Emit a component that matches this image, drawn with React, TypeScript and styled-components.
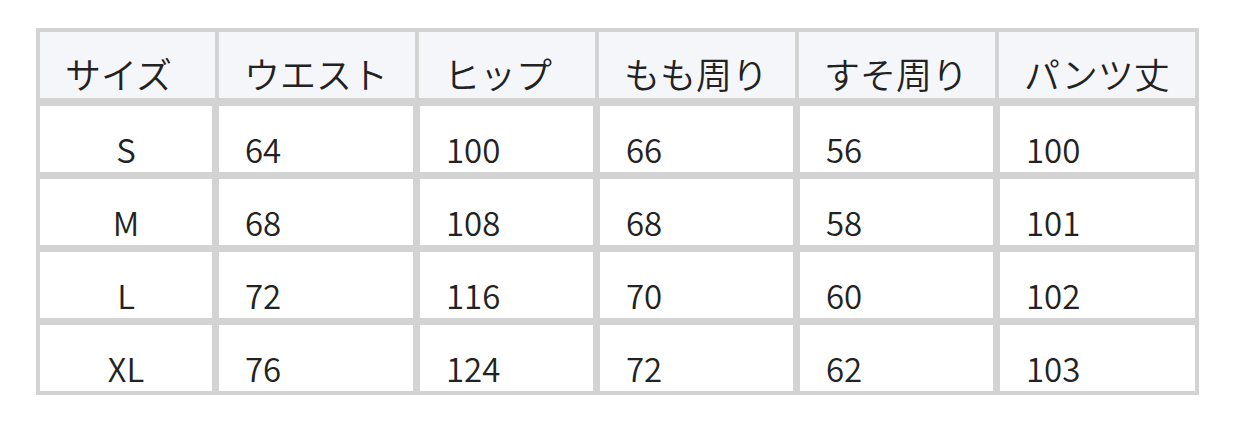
import React from "react";
import styled, { createGlobalStyle } from "styled-components";

const GlobalStyle = createGlobalStyle`
  html, body {
    margin: 0;
    padding: 0;
    background: #ffffff;
  }
  body {
    font-family: "Noto Sans CJK JP", "Noto Sans", sans-serif;
  }
`;

const Page = styled.div`
  padding: 28px 0 0 36px;
`;

const Table = styled.div`
  width: 1163px;
  box-sizing: border-box;
  background: #d3d3d3;
  padding: 4px;
  display: flex;
  flex-direction: column;
  gap: 8px;
`;

const HeaderRow = styled.div`
  display: grid;
  grid-template-columns: 175px 196px 176px 196px 196px 196px;
  column-gap: 4px;
`;

const Body = styled.div`
  display: grid;
  grid-template-columns: 172px 194px 173px 193px 193px 195px;
  grid-auto-rows: 66px;
  column-gap: 7px;
  row-gap: 7px;
`;

const HeadCell = styled.div`
  height: 66px;
  box-sizing: border-box;
  background: #f5f6fa;
  color: #222222;
  font-size: 36px;
  font-weight: 350;
  line-height: 1;
  display: flex;
  align-items: center;
  padding: 16px 0 0 25px;
  white-space: nowrap;
`;

const Cell = styled.div<{ $center?: boolean }>`
  box-sizing: border-box;
  background: #ffffff;
  color: #222222;
  font-size: 33px;
  font-weight: 350;
  line-height: 1;
  display: flex;
  align-items: center;
  justify-content: ${(p) => (p.$center ? "center" : "flex-start")};
  padding: ${(p) => (p.$center ? "20px 0 0 0" : "20px 0 0 26px")};
  white-space: nowrap;
`;

const headers = ["サイズ", "ウエスト", "ヒップ", "もも周り", "すそ周り", "パンツ丈"];

const rows: string[][] = [
  ["S", "64", "100", "66", "56", "100"],
  ["M", "68", "108", "68", "58", "101"],
  ["L", "72", "116", "70", "60", "102"],
  ["XL", "76", "124", "72", "62", "103"],
];

export default function App() {
  return (
    <>
      <GlobalStyle />
      <Page>
        <Table>
          <HeaderRow>
            {headers.map((h) => (
              <HeadCell key={h}>{h}</HeadCell>
            ))}
          </HeaderRow>
          <Body>
            {rows.map((r) =>
              r.map((v, i) => (
                <Cell key={r[0] + i} $center={i === 0}>
                  {v}
                </Cell>
              ))
            )}
          </Body>
        </Table>
      </Page>
    </>
  );
}
